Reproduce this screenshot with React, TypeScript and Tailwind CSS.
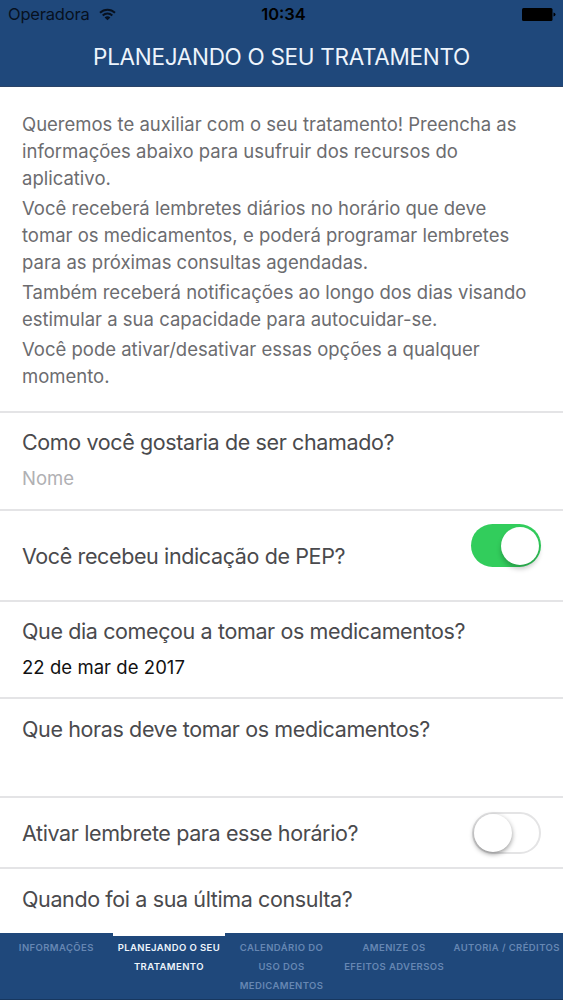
import type { ReactNode } from 'react';

const intro = [
	['Queremos te auxiliar com o seu tratamento! Preencha as', 'informações abaixo para usufruir dos recursos do', 'aplicativo.'],
	['Você receberá lembretes diários no horário que deve', 'tomar os medicamentos, e poderá programar lembretes', 'para as próximas consultas agendadas.'],
	['Também receberá notificações ao longo dos dias visando', 'estimular a sua capacidade para autocuidar-se.'],
	['Você pode ativar/desativar essas opções a qualquer', 'momento.']
]

const tabs = [
	{ lines: ['INFORMAÇÕES'], active: false },
	{ lines: ['PLANEJANDO O SEU', 'TRATAMENTO'], active: true },
	{ lines: ['CALENDÁRIO DO', 'USO DOS', 'MEDICAMENTOS'], active: false },
	{ lines: ['AMENIZE OS', 'EFEITOS ADVERSOS'], active: false },
	{ lines: ['AUTORIA / CRÉDITOS'], active: false }
]

function Question({ children }: { children: ReactNode }) {
	return <h2 className="text-[21.5px] leading-[30px] tracking-[-0.38px] text-[#4a4a4d] whitespace-nowrap">{children}</h2>
}

function Toggle({ on }: { on?: boolean }) {
	return on ? (
		<span className="flex justify-end items-center w-[70px] h-[43px] rounded-full bg-[#32cd5c] p-[2px]">
			<span className="block w-[38px] h-[38px] rounded-full bg-white shadow-[0_4px_5px_rgba(0,0,0,0.22)]"></span>
		</span>
	) : (
		<span className="flex items-center w-[69px] h-[42px] rounded-full border-2 border-[#e4e4e5] bg-white">
			<span className="block shrink-0 w-[38px] h-[38px] rounded-full bg-white shadow-[0_2px_5px_rgba(0,0,0,0.42)]"></span>
		</span>
	)
}

export default function App() {
	return (
		<div className="flex flex-col w-[563px] h-[1000px] overflow-hidden bg-white font-['Inter',sans-serif]">
			<header className="shrink-0 h-[87px] bg-[#1f487b] border-b border-[#2b4468]">
				<div className="grid grid-cols-3 items-center h-[28px] pl-[8px] pr-[7px] text-black">
					<div className="flex items-center gap-[9px] text-[16.5px] text-[#07111f]">
						<span className="tracking-[-0.2px]">Operadora</span>
						<svg width="17" height="13" viewBox="0 0 17 13" fill="none" stroke="#07111f" strokeWidth="2">
							<path d="M1 4.7C5.2 0.6 11.8 0.6 16 4.7" />
							<path d="M3.7 7.5C6.4 4.9 10.6 4.9 13.3 7.5" />
							<path d="M8.5 12.3L5.6 9.4C7.2 7.9 9.8 7.9 11.4 9.4Z" fill="#07111f" stroke="none" />
						</svg>
					</div>
					<div className="pl-[3px] text-center text-[16.5px] font-semibold">10:34</div>
					<svg className="justify-self-end" width="34" height="13" viewBox="0 0 34 13">
						<rect width="30.5" height="13" rx="1.5" />
						<path d="M31.5 4.5Q33.5 5 33.5 6.5T31.5 8.5Z" />
					</svg>
				</div>
				<h1 className="text-center text-[22.5px] leading-[58px] tracking-[-0.3px] text-[#edf4fc] whitespace-nowrap">PLANEJANDO O SEU TRATAMENTO</h1>
			</header>

			<main className="flex-1 min-h-0 overflow-hidden">
				<section className="h-[326px] pt-[24px] px-[22px] border-b-2 border-[#e4e4e6] text-[18.5px] leading-[27px] text-[#6c6c6f]">
					{intro.map((lines) => (
						<p key={lines[0]} className="mb-[3px] whitespace-nowrap">
							{lines.map((line) => <span key={line} className="block">{line}</span>)}
						</p>
					))}
				</section>
				<section className="h-[98px] pt-[14px] px-[22px] border-b-2 border-[#e4e4e6]">
					<Question>Como você gostaria de ser chamado?</Question>
					<input className="block mt-[9px] h-[26px] w-full text-[18.5px] placeholder:text-[#b0b0b3] outline-none" placeholder="Nome" />
				</section>
				<section className="flex justify-between h-[91px] pt-[13px] px-[22px] border-b-2 border-[#e4e4e6]">
					<div className="pt-[17px]"><Question>Você recebeu indicação de PEP?</Question></div>
					<Toggle on />
				</section>
				<section className="h-[97px] pt-[14px] px-[22px] border-b-2 border-[#e4e4e6]">
					<Question>Que dia começou a tomar os medicamentos?</Question>
					<div className="mt-[8px] text-[18.5px] leading-[26px] tracking-[0.05px] text-[#111112]">22 de mar de 2017</div>
				</section>
				<section className="h-[99px] pt-[15px] px-[22px] border-b-2 border-[#e4e4e6]">
					<Question>Que horas deve tomar os medicamentos?</Question>
				</section>
				<section className="flex items-center justify-between h-[71px] px-[22px] border-b-2 border-[#e4e4e6]">
					<div className="pt-px"><Question>Ativar lembrete para esse horário?</Question></div>
					<Toggle />
				</section>
				<section className="pt-[15px] px-[22px]">
					<Question>Quando foi a sua última consulta?</Question>
				</section>
			</main>

			<nav className="grid grid-cols-5 shrink-0 h-[67px] bg-[#1f487b] border-b border-[#17375f]">
				{tabs.map((tab) => (
					<div
						key={tab.lines[0]}
						className={`flex flex-col items-center border-t-[3px] pt-[2px] text-[9.5px] leading-[19px] font-semibold tracking-[0.4px] whitespace-nowrap ${tab.active ? 'border-white text-[#eef5fc]' : 'border-transparent text-[#6687b3]'}`}
					>
						{tab.lines.map((line) => <span key={line}>{line}</span>)}
					</div>
				))}
			</nav>
		</div>
	);
}
